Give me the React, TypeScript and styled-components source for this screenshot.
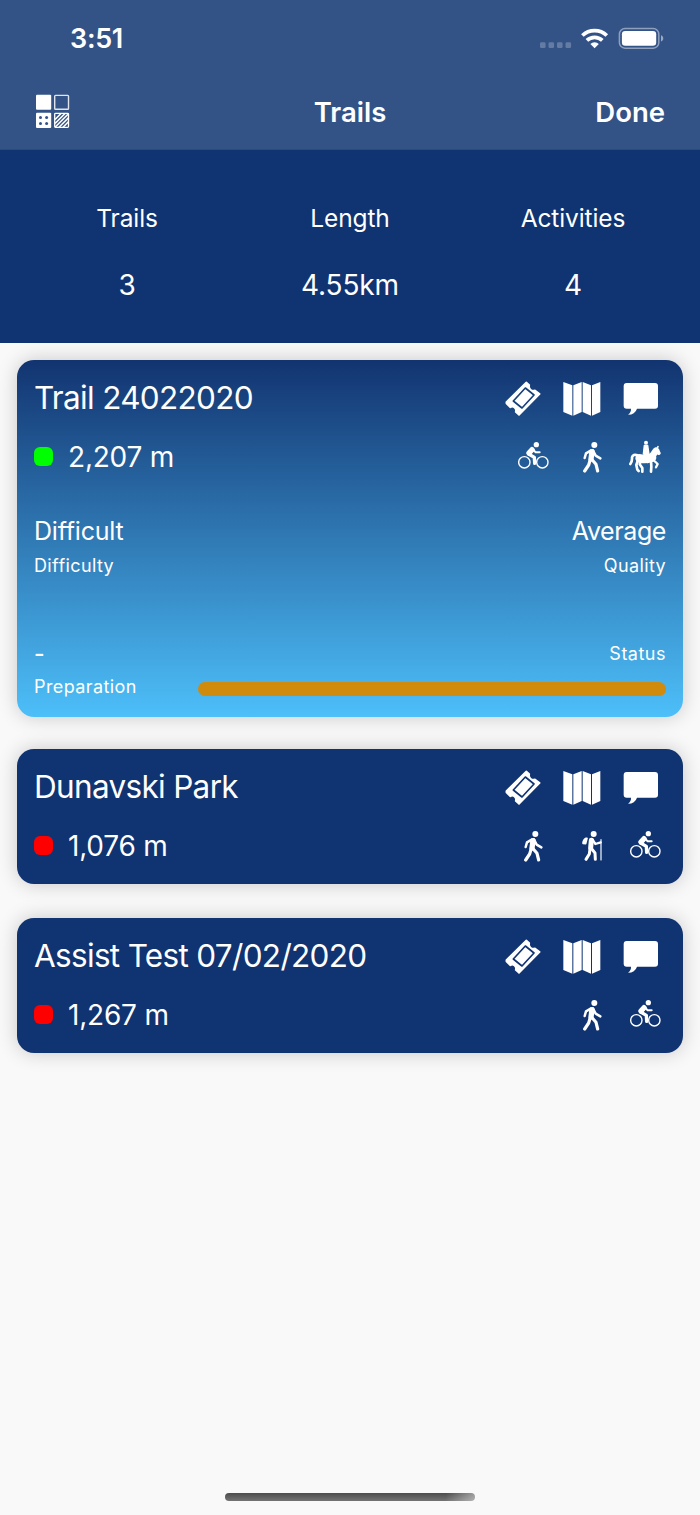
import React from "react";
import styled, { createGlobalStyle } from "styled-components";

const Global = createGlobalStyle`
  * { box-sizing: border-box; }
  body { margin: 0; background: #f9f9f9; font-family: Inter, "Liberation Sans", sans-serif; color: #fff; }
`;

const Screen = styled.div`
  width: 700px;
  height: 1515px;
  display: flex;
  flex-direction: column;
  background: #f9f9f9;
`;

const Text = styled.span<{ $size: number; $weight?: number; $track?: number; $line?: number }>`
  display: block;
  white-space: nowrap;
  font-size: ${(p) => p.$size}px;
  font-weight: ${(p) => p.$weight ?? 400};
  letter-spacing: ${(p) => p.$track ?? 0}px;
  line-height: ${(p) => p.$line ?? 34}px;
`;

const TopArea = styled.header`
  height: 150px;
  background: #335286;
  border-bottom: 1px solid #2a4a82;
`;

const StatusBar = styled.div`
  height: 76px;
  padding: 0 36px 0 70px;
  display: flex;
  justify-content: space-between;
  align-items: center;
`;

const Clock = styled(Text)`
  padding-top: 2px;
`;

const NavBar = styled.nav`
  height: 70px;
  padding: 0 35px;
  display: grid;
  grid-template-columns: 1fr auto 1fr;
  align-items: center;
  & > :last-child { justify-self: end; }
`;

const NavText = styled(Text)`
  padding-top: 1px;
`;

const Summary = styled.section`
  height: 193px;
  padding: 51px 15px 0;
  display: grid;
  grid-template-columns: repeat(3, 223px);
  background: #103371;
`;

const Stat = styled.div`
  display: flex;
  flex-direction: column;
  align-items: center;
  gap: 33px;
  padding-left: 1px;
`;

const List = styled.main`
  flex: 1;
  padding: 17px 17px 0;
  display: flex;
  flex-direction: column;
`;

const Card = styled.article<{ $open?: boolean }>`
  height: ${(p) => (p.$open ? 357 : 135)}px;
  margin-bottom: ${(p) => (p.$open ? 32 : 34)}px;
  padding: 16px 17px 0;
  border-radius: 17px;
  box-shadow: 0 0 20px rgba(0, 0, 0, 0.2);
  background: ${(p) => (p.$open ? "linear-gradient(#123470, #4dbff9)" : "#103371")};
`;

const Row = styled.div<{ $h: number }>`
  height: ${(p) => p.$h}px;
  display: flex;
  justify-content: space-between;
  align-items: center;
`;

const Tools = styled.div`
  display: flex;
  gap: 22px;
  padding-top: 2px;
  margin-right: 7px;
  svg { display: block; }
`;

const Distance = styled.div`
  display: flex;
  align-items: center;
  gap: 15px;
`;

const Dot = styled.i<{ $color: string }>`
  width: 19px;
  height: 19px;
  margin-bottom: 1px;
  border-radius: 6px;
  background: ${(p) => p.$color};
`;

const Activities = styled.div`
  display: flex;
  margin-right: 4px;
`;

const Activity = styled.span<{ $raise: boolean }>`
  width: 34px;
  height: 34px;
  padding-bottom: ${(p) => (p.$raise ? 3 : 0)}px;
  display: flex;
  justify-content: center;
  align-items: center;
  margin-left: 25px;
  &:last-child { margin-left: 19px; }
`;

const Details = styled.div`
  padding-top: 18px;
`;

const Gap = styled.div`
  height: 54px;
`;

const Bar = styled.div`
  width: 468px;
  height: 14px;
  margin-top: 4px;
  border-radius: 7px;
  background: #d08a0c;
`;

const HomeArea = styled.footer`
  height: 22px;
  display: flex;
  justify-content: center;
`;

const HomeBar = styled.div`
  width: 250px;
  height: 8px;
  border-radius: 4px;
  background: linear-gradient(100deg, transparent 88%, rgba(255, 255, 255, 0.45)), linear-gradient(#4c4c4c, #747474);
`;

const StatusIcons = () => (
  <svg width="124" height="24" viewBox="540 26 124 24" fill="#fff">
    <g opacity=".24">
      {[0, 1, 2, 3].map((i) => (
        <rect key={i} x={540 + i * 8.5} y="42.3" width="5.6" height="5.8" rx="1.4" />
      ))}
    </g>
    <path d="M594.6 48.2l-4.2-4.2a6.2 6.2 0 0 1 8.4 0z" />
    <g fill="none" stroke="#fff" strokeWidth="3.7">
      <path d="M582.4 35.5a17.6 17.6 0 0 1 24.4 0" />
      <path d="M586.9 40.4a11.2 11.2 0 0 1 15.4 0" />
    </g>
    <rect x="619.4" y="28.6" width="39.4" height="19.6" rx="5.5" fill="none" stroke="#fff" strokeOpacity=".45" strokeWidth="1.5" />
    <rect x="621.9" y="31" width="34.3" height="14.8" rx="3.3" />
    <path d="M661 35.2c3 1.2 3 5.2 0 6.4z" opacity=".5" />
  </svg>
);

const PatternIcon = () => (
  <svg width="35" height="34" viewBox="35 94 35 34">
    <rect x="36" y="94.8" width="15.2" height="15" rx="1" fill="#fff" />
    <rect x="54.7" y="95.4" width="13.8" height="13.8" rx=".8" fill="none" stroke="#fff" strokeOpacity=".85" strokeWidth="1.4" />
    <rect x="36" y="112.7" width="15.2" height="15.2" rx="1" fill="#fff" />
    <g fill="#335286">
      <circle cx="40.5" cy="117.4" r="1.5" />
      <circle cx="46.6" cy="117.4" r="1.5" />
      <circle cx="40.5" cy="123.4" r="1.5" />
      <circle cx="46.6" cy="123.4" r="1.5" />
    </g>
    <rect x="54.7" y="113.3" width="13.8" height="14" rx=".8" fill="none" stroke="#fff" strokeWidth="1.3" />
    <path d="M55 119.5l6-6M55 123.5l10-10M55 127.3l13.5-13.5M59 127.3l9.5-9.5M63 127.3l5.5-5.5" stroke="#fff" strokeWidth="1.6" />
  </svg>
);

const TicketIcon = ({ ink }: { ink: string }) => (
  <svg width="36" height="36" viewBox="0 0 108 108" fill="#fff" stroke="#fff" strokeLinejoin="round">
    <path d="M64 4l9 8c-3 11 7 20 17 16l14 11L42 102l-10-9c3-11-7-20-16-14L4 67V63z" strokeWidth="5" />
    <path d="M61 21l26 21-36 39-26-21z" fill="none" stroke={ink} strokeWidth="5" />
  </svg>
);

const MapIcon = () => (
  <svg width="38" height="36" viewBox="0 0 114 108" fill="#fff">
    <path d="M1 3l27 10v91L1 93zM31 13L56 3v90l-25 11zM59 3l25 10v91L59 93zM87 13l25-10v90l-25 11z" />
  </svg>
);

const ChatIcon = () => (
  <svg width="36" height="36" viewBox="0 0 108 108" fill="#fff">
    <path d="M11 6h85q9 0 9 9v59q0 9-9 9H42Q36 101 15 101q10-7 9-18H11q-9 0-9-9V15q0-9 9-9z" />
  </svg>
);

const Figure = styled.svg`
  flex: none;
  fill: none;
  stroke: #fff;
  stroke-linecap: round;
  stroke-linejoin: round;
`;

const BikeIcon = () => (
  <Figure width="31" height="27" viewBox="0 0 93 81">
    <circle cx="19" cy="61" r="17" strokeWidth="4.2" />
    <circle cx="73" cy="61" r="17" strokeWidth="4.2" />
    <circle cx="55" cy="8" r="8" fill="#fff" stroke="none" />
    <path d="M42 23L33 33" strokeWidth="16" />
    <path d="M32 36l17 10 1 18" strokeWidth="10" />
    <path d="M44 21l9 10h12" strokeWidth="6" />
  </Figure>
);

const WalkIcon = () => (
  <Figure width="19" height="31" viewBox="0 0 57 93">
    <circle cx="34" cy="9" r="9" fill="#fff" stroke="none" />
    <path d="M27 29l-3 22" strokeWidth="16" />
    <path d="M30 26l8 15 14 8" strokeWidth="7.5" />
    <path d="M23 26L9 34 5 48" strokeWidth="7.5" />
    <path d="M26 52l13 15 5 20" strokeWidth="9.5" />
    <path d="M22 52l-5 17-12 18" strokeWidth="9.5" />
  </Figure>
);

const HikeIcon = () => (
  <Figure width="21" height="31" viewBox="0 0 63 93">
    <circle cx="35" cy="9" r="9" fill="#fff" stroke="none" />
    <path d="M11 22l4 0-4 16-8-1q0-10 8-15z" fill="#fff" strokeWidth="5" />
    <path d="M28 28l-2 22" strokeWidth="15" />
    <path d="M32 26l8 13 16-5" strokeWidth="7" />
    <path d="M28 52l11 14 1 19" strokeWidth="9" />
    <path d="M24 54l-2 15-10 16" strokeWidth="9" />
    <path d="M57 26v61" strokeWidth="3.5" />
  </Figure>
);

const HorseIcon = () => (
  <Figure width="32" height="34" viewBox="0 0 96 102">
    <circle cx="51" cy="8" r="6" fill="#fff" stroke="none" />
    <path d="M46 16h10l4 26-4 26-10-4V42h-3z" fill="#fff" strokeWidth="4" />
    <path d="M32 55q16 5 37-2" strokeWidth="26" />
    <path d="M69 49l12-17" strokeWidth="20" />
    <path d="M83 30l6 9" strokeWidth="12" />
    <path d="M84 25l3-5" strokeWidth="5" />
    <path d="M26 46Q12 41 9 52q1 12-5 20" strokeWidth="8" />
    <path d="M27 60l-5 15 3 14 4 4" strokeWidth="8" />
    <path d="M34 64l-2 9 8 11v11" strokeWidth="8" />
    <path d="M66 62l1 18-1 15" strokeWidth="8" />
    <path d="M73 60l13 12-5 10" strokeWidth="7" />
  </Figure>
);

type Kind = "bike" | "walk" | "hike" | "horse";
const kinds: Record<Kind, React.ReactNode> = {
  bike: <BikeIcon />,
  walk: <WalkIcon />,
  hike: <HikeIcon />,
  horse: <HorseIcon />,
};

interface TrailProps {
  name: string;
  length: string;
  color: string;
  activities: Kind[];
  children?: React.ReactNode;
}

const Trail = ({ name, length, color, activities, children }: TrailProps) => (
  <Card $open={!!children}>
    <Row $h={43}>
      <Text $size={31.5} $track={-0.68} $line={40}>{name}</Text>
      <Tools><TicketIcon ink={children ? "#164079" : "#103371"} /><MapIcon /><ChatIcon /></Tools>
    </Row>
    <Row $h={76}>
      <Distance>
        <Dot $color={color} />
        <Text $size={28} $track={-0.2}>{length}</Text>
      </Distance>
      <Activities>
        {activities.map((a) => <Activity key={a} $raise={a === "bike"}>{kinds[a]}</Activity>)}
      </Activities>
    </Row>
    {children}
  </Card>
);

export default function App() {
  return (
    <Screen>
      <Global />
      <TopArea>
        <StatusBar>
          <Clock $size={27} $weight={600} $track={-0.3}>3:51</Clock>
          <StatusIcons />
        </StatusBar>
        <NavBar>
          <PatternIcon />
          <NavText $size={27.5} $weight={600}>Trails</NavText>
          <NavText $size={27.5} $weight={600}>Done</NavText>
        </NavBar>
      </TopArea>
      <Summary>
        {[["Trails", "3"], ["Length", "4.55km"], ["Activities", "4"]].map(([label, value]) => (
          <Stat key={label}>
            <Text $size={24.5} $track={-0.1}>{label}</Text>
            <Text $size={28} $track={-0.15}>{value}</Text>
          </Stat>
        ))}
      </Summary>
      <List>
        <Trail name="Trail 24022020" length="2,207 m" color="#00ff00" activities={["bike", "walk", "horse"]}>
          <Details>
            <Row $h={36}>
              <Text $size={25} $track={-0.2}>Difficult</Text>
              <Text $size={25} $track={-0.4}>Average</Text>
            </Row>
            <Row $h={34}>
              <Text $size={18} $track={0.38}>Difficulty</Text>
              <Text $size={18} $track={0.38}>Quality</Text>
            </Row>
            <Gap />
            <Row $h={34}>
              <Text $size={23} $weight={500}>-</Text>
              <Text $size={18} $track={0.5}>Status</Text>
            </Row>
            <Row $h={31}>
              <Text $size={18} $track={0.4}>Preparation</Text>
              <Bar />
            </Row>
          </Details>
        </Trail>
        <Trail name="Dunavski Park" length="1,076 m" color="#ff0000" activities={["walk", "hike", "bike"]} />
        <Trail name="Assist Test 07/02/2020" length="1,267 m" color="#ff0000" activities={["walk", "bike"]} />
      </List>
      <HomeArea><HomeBar /></HomeArea>
    </Screen>
  );
}
